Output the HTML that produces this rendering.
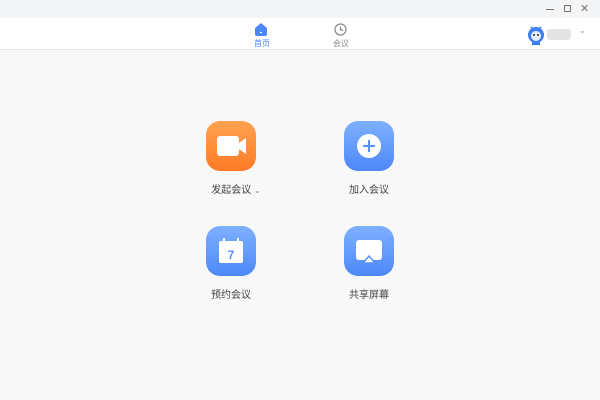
<!DOCTYPE html>
<html><head><meta charset="utf-8"><style>
*{margin:0;padding:0;box-sizing:border-box}
body{width:600px;height:400px;background:#f8f8f8;font-family:"Liberation Sans","Noto Sans CJK SC",sans-serif;position:relative;overflow:hidden}
.title{position:absolute;left:0;top:0;width:600px;height:18px;background:#f4f5f6}
.nav{position:absolute;left:0;top:18px;width:600px;height:32px;background:#fff;border-bottom:1px solid #e6e6e6}
.ic{position:absolute;width:50px;height:50px;border-radius:14px}
.o{background:linear-gradient(#ffa24f,#ff7a26)}
.b{background:linear-gradient(#7eb0ff,#4e88f8)}
.lbl{position:absolute;font-size:10px;color:#444;width:100px;text-align:center}
.t{position:absolute;font-size:8px;color:#888}
</style></head><body>
<div class="title">
<div style="position:absolute;left:546px;top:9px;width:8px;height:1px;background:#777"></div>
<div style="position:absolute;left:564px;top:5px;width:7px;height:7px;border:1px solid #777"></div>
<div style="position:absolute;left:580px;top:2px;font-size:11px;color:#777">✕</div>
</div>
<div class="nav">
<svg style="position:absolute;left:254px;top:5px" width="14" height="13" viewBox="0 0 14 13"><path d="M1 5 L7 0 L13 5 V11 Q13 13 11 13 H3 Q1 13 1 11Z" fill="#4d87f7"/><rect x="6" y="9" width="2" height="1" fill="#fff"/></svg>
<div class="t" style="left:254px;top:20px;color:#4d87f7">首页</div>
<svg style="position:absolute;left:334px;top:5px" width="13" height="13" viewBox="0 0 13 13"><circle cx="6.5" cy="6.5" r="5.5" fill="none" stroke="#888" stroke-width="1.2"/><path d="M6.5 3.5V7H9" fill="none" stroke="#888" stroke-width="1.2"/></svg>
<div class="t" style="left:333px;top:20px">会议</div>
<svg style="position:absolute;left:526px;top:6px" width="20" height="22" viewBox="0 0 20 22"><circle cx="10" cy="11" r="8" fill="#3d7ef0"/><circle cx="10" cy="12" r="5" fill="#e8f0ff"/><circle cx="8" cy="11" r="1" fill="#234"/><circle cx="12" cy="11" r="1" fill="#234"/><path d="M5 3L7 5M15 3L13 5" stroke="#3d7ef0" stroke-width="1.5"/><rect x="6" y="18" width="8" height="3" fill="#3d7ef0"/></svg>
<div style="position:absolute;left:547px;top:11px;width:24px;height:11px;background:#e4e4e4;border-radius:3px"></div>
<div style="position:absolute;left:579px;top:8px;font-size:8px;color:#999">⌄</div>
</div>
<div class="ic o" style="left:206px;top:121px"><svg width="50" height="50" viewBox="0 0 50 50"><rect x="11" y="15" width="22" height="20" rx="3" fill="#fff"/><path d="M33 22L40 17V33L33 28Z" fill="#fff"/></svg></div>
<div class="lbl" style="left:186px;top:181px">发起会议 <span style="font-size:8px;color:#888">⌄</span></div>
<div class="ic b" style="left:344px;top:121px"><svg width="50" height="50" viewBox="0 0 50 50"><circle cx="25" cy="25" r="12" fill="#fff"/><path d="M25 19V31M19 25H31" stroke="#5a90f8" stroke-width="2"/></svg></div>
<div class="lbl" style="left:319px;top:181px">加入会议</div>
<div class="ic b" style="left:206px;top:226px"><svg width="50" height="50" viewBox="0 0 50 50"><rect x="13" y="15" width="24" height="22" rx="2" fill="#fff"/><rect x="17" y="12" width="2" height="5" fill="#fff"/><rect x="31" y="12" width="2" height="5" fill="#fff"/><text x="25" y="33" font-size="12" font-weight="bold" fill="#5a90f8" text-anchor="middle" font-family="Liberation Sans">7</text></svg></div>
<div class="lbl" style="left:181px;top:286px">预约会议</div>
<div class="ic b" style="left:344px;top:226px"><svg width="50" height="50" viewBox="0 0 50 50"><rect x="12" y="14" width="26" height="20" rx="3" fill="#fff"/><path d="M19 37L25 30L31 37Z" fill="#fff" stroke="#5a90f8" stroke-width="1.5"/></svg></div>
<div class="lbl" style="left:319px;top:286px">共享屏幕</div>
</body></html>
